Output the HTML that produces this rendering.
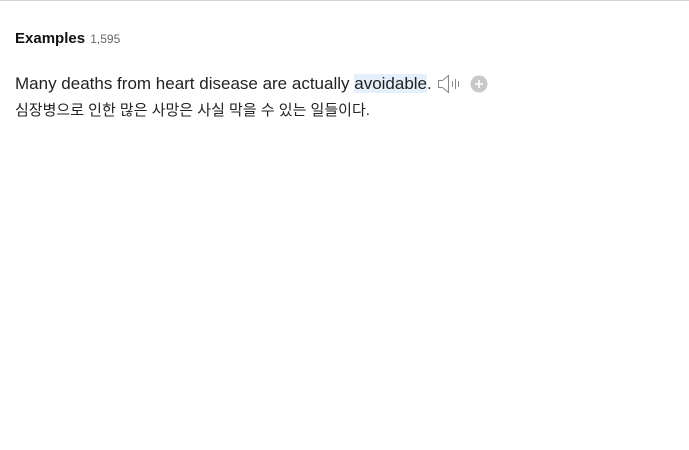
<!DOCTYPE html>
<html><head><meta charset="utf-8"><style>
body{margin:0;width:689px;height:450px;background:#fff;font-family:"Liberation Sans",Arial,sans-serif;overflow:hidden;position:relative}
.top{position:absolute;left:0;top:0;width:689px;height:1px;border-top:1px solid #d4d4d4}
.h{position:absolute;left:15px;top:30px;font-size:15px;font-weight:bold;color:#111;white-space:nowrap}
.h span{font-weight:normal;font-size:12px;color:#666;margin-left:1px}
.en{position:absolute;left:15px;top:73px;font-size:17px;color:#222;white-space:nowrap;line-height:21px}
.hl{background:#e5f0fb}
.ko{position:absolute;left:15px;top:99px;font-size:15px;color:#222;white-space:nowrap;font-family:"Liberation Sans","Noto Sans CJK KR",sans-serif}
svg{position:absolute}
</style></head><body>
<div class="top"></div>
<div class="h">Examples <span>1,595</span></div>
<div class="en">Many deaths from heart disease are actually <span class="hl">avoidable</span>.</div>
<svg style="left:437px;top:74px" width="26" height="20" viewBox="0 0 26 20">
<path d="M1.5 6.5h4l6-5v17l-6-5h-4z" fill="none" stroke="#888" stroke-width="1"/>
<path d="M15.5 7v6M18.5 5v10M21.5 7v6" stroke="#888" stroke-width="1"/>
</svg>
<svg style="left:470px;top:75px" width="18" height="18" viewBox="0 0 18 18">
<circle cx="9" cy="9" r="8.5" fill="#c8c8c8"/>
<path d="M9 5v8M5 9h8" stroke="#fff" stroke-width="1.6"/>
</svg>
<div class="ko">심장병으로 인한 많은 사망은 사실 막을 수 있는 일들이다.</div>
</body></html>
